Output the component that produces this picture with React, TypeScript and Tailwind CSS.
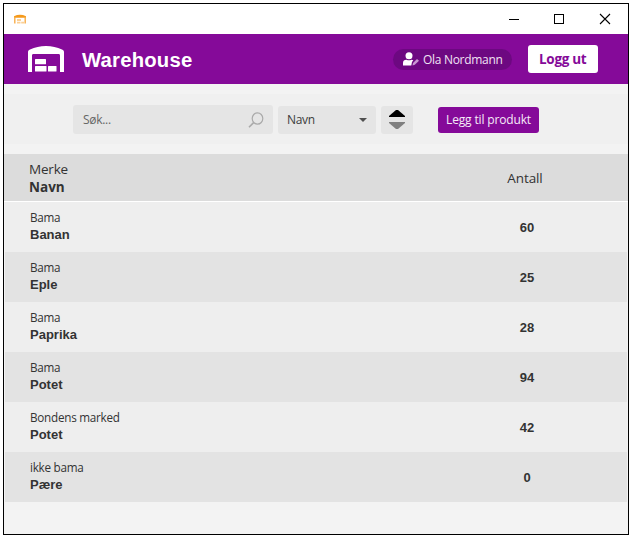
import type { ReactNode } from "react";

const SEGOE = "font-['Open_Sans','Noto_Sans',sans-serif]";
const ARIAL = "font-['Liberation_Sans',sans-serif]";

const products = [
  { brand: "Bama", name: "Banan", amount: 60 },
  { brand: "Bama", name: "Eple", amount: 25 },
  { brand: "Bama", name: "Paprika", amount: 28 },
  { brand: "Bama", name: "Potet", amount: 94 },
  { brand: "Bondens marked", name: "Potet", amount: 42 },
  { brand: "ikke bama", name: "Pære", amount: 0 },
];

function TitleBar() {
  return (
    <div className="flex h-[30px] shrink-0 items-center bg-white pl-2">
      <svg width="16" height="16" viewBox="0 0 16 16">
        <path d="M2.800 12.500V6.500M13.200 12.500V6.500" fill="none" stroke="#f8ad4a" strokeWidth="1.400" />
        <path d="M2 5.200Q8 2.400 14 5.200V6.700H2Z" fill="#f59a1c" />
        <path d="M5 8h4v2H5zM5 10.700h3.500v1.800H5zM9.200 10.700h3v1.800h-3z" fill="#fbcf94" />
      </svg>
      <svg className="ml-auto mr-[17px]" width="102" height="12" viewBox="0 0 102 12" fill="none" stroke="#000" shapeRendering="crispEdges">
        <path d="M0 6.500H10" />
        <path d="M45.500 1.500h9v9h-9z" />
        <path d="M91 1L101 11M101 1L91 11" shapeRendering="auto" strokeWidth="1.100" />
      </svg>
    </div>
  );
}

function Header() {
  return (
    <header className="flex h-[50px] shrink-0 items-center bg-[#850a99] pl-6 pr-[30px] text-white">
      <svg width="36" height="26" viewBox="0 0 36 26" fill="#fff">
        <path d="M0 26V6.200C0 4.600 .7 4 2 3.500C7 1.200 12 0 18 0S29 1.200 34 3.500C35.300 4 36 4.600 36 6.200V26H32V9.400Q32 8 30.500 8H5.500Q4 8 4 9.400V26Z" />
        <rect x="7" y="13" width="11" height="5.200" rx=".5" />
        <rect x="7" y="20" width="11.500" height="5.500" rx=".5" />
        <rect x="20" y="20" width="8.500" height="5.500" rx=".5" />
      </svg>
      <h1 className={`${ARIAL} ml-[18px] pt-px text-[20.300px] leading-[50px] font-bold tracking-[0.200px]`}>Warehouse</h1>
      <div className="ml-auto mr-[15.500px] flex h-[21px] w-[119px] items-center rounded-full bg-[#6d0881] pl-[10px]">
        <svg width="16" height="14" viewBox="0 0 16 14">
          <circle cx="6" cy="3.700" r="3.500" fill="#fff" />
          <path d="M0 13.500V11Q0 7.700 3.500 7.700Q6 8.700 8.500 7.700L10.300 8.300L9 10L8.300 13.500Z" fill="#fff" />
          <path d="M9.500 13.500L10 11L14 7L16 8.800L11.800 12.800Z" fill="#c898d2" />
        </svg>
        <span className={`${SEGOE} ml-1 whitespace-nowrap text-[12px] leading-[21px] tracking-[-0.300px] text-[#f0e2f3]`}>Ola Nordmann</span>
      </div>
      <button className={`${SEGOE} h-7 w-[70.500px] rounded-[3px] bg-white text-[13.500px] leading-[28px] font-bold tracking-[-0.300px] text-[#850a99]`}>Logg ut</button>
    </header>
  );
}

function Toolbar() {
  return (
    <div className={`${SEGOE} my-[10px] flex h-[50px] shrink-0 items-start bg-[#f0f0f0] pt-[11px] pl-[69px] text-[12px] text-[#3c3c3c]`}>
      <div className="flex h-[29px] w-[200px] items-center justify-between rounded-[3px] bg-[#e5e5e5] pl-[10px] pr-[9px]">
        <span className="tracking-[-0.300px] text-[#666]">Søk...</span>
        <svg width="16" height="16" viewBox="0 0 16 16" fill="none" stroke="#aaa" strokeWidth="1.200">
          <ellipse cx="9.500" cy="6.500" rx="5.300" ry="5.700" />
          <path d="M5.600 10.600L1 15.200" strokeWidth="1.600" />
        </svg>
      </div>
      <div className="mt-px ml-[5px] flex h-7 w-[98px] items-center justify-between rounded-[3px] bg-[#e5e5e5] pl-[9px] pr-[9px]">
        <span className="tracking-[-0.300px]">Navn</span>
        <svg width="8" height="4" viewBox="0 0 8 4"><path d="M0 0H8L4 4Z" fill="#505050" /></svg>
      </div>
      <div className="mt-px ml-[5px] flex h-7 w-8 items-center justify-center rounded-[3px] bg-[#e5e5e5]">
        <svg width="16" height="20" viewBox="0 0 16 20">
          <path d="M0 7V6L7 0H9L16 6V7Z" fill="#000" />
          <path d="M0 12V13L7 19H9L16 13V12Z" fill="#808080" />
        </svg>
      </div>
      <button className="mt-[2px] ml-[25px] h-[26px] w-[101px] rounded-[3px] bg-[#850a99] text-[12px] tracking-[-0.150px] whitespace-nowrap text-[#f5eaf7]">Legg til produkt</button>
    </div>
  );
}

function Row({ children, amount, className }: { children: ReactNode; amount: ReactNode; className: string }) {
  return (
    <div className={`flex shrink-0 items-center text-[#333] ${className}`}>
      <div className="flex flex-col">{children}</div>
      <div className="ml-auto mr-[60px] w-20 text-center">{amount}</div>
    </div>
  );
}

export default function App() {
  return (
    <div className="h-[538px] w-[635px] bg-white p-[3px]">
      <main className="flex h-[532px] w-[626px] flex-col border border-black bg-[#f3f3f3]">
        <TitleBar />
        <Header />
        <Toolbar />
        <Row
          className="h-12 border-b border-white bg-[#dcdcdc] pl-[25px] pr-[3px] pt-px"
          amount={<span className={`${SEGOE} block text-[13.500px] leading-[18px] tracking-[-0.100px]`}>Antall</span>}
        >
          <span className={`${SEGOE} text-[13.500px] leading-[18px] tracking-[-0.200px]`}>Merke</span>
          <span className={`${SEGOE} text-[13.500px] leading-[18px] font-bold`}>Navn</span>
        </Row>
        <div className="mx-px flex flex-col">
          {products.map((p, i) => (
            <Row
              key={i}
              className={`h-[50px] pb-[2px] pl-[25px] ${i % 2 ? "bg-[#e3e3e3]" : "bg-[#eee]"}`}
              amount={<span className={`${ARIAL} text-[13px] font-bold`}>{p.amount}</span>}
            >
              <span className={`${SEGOE} text-[11.700px] leading-[17px] tracking-[-0.250px]`}>{p.brand}</span>
              <span className={`${ARIAL} text-[13px] leading-[17px] font-bold`}>{p.name}</span>
            </Row>
          ))}
        </div>
      </main>
    </div>
  );
}
